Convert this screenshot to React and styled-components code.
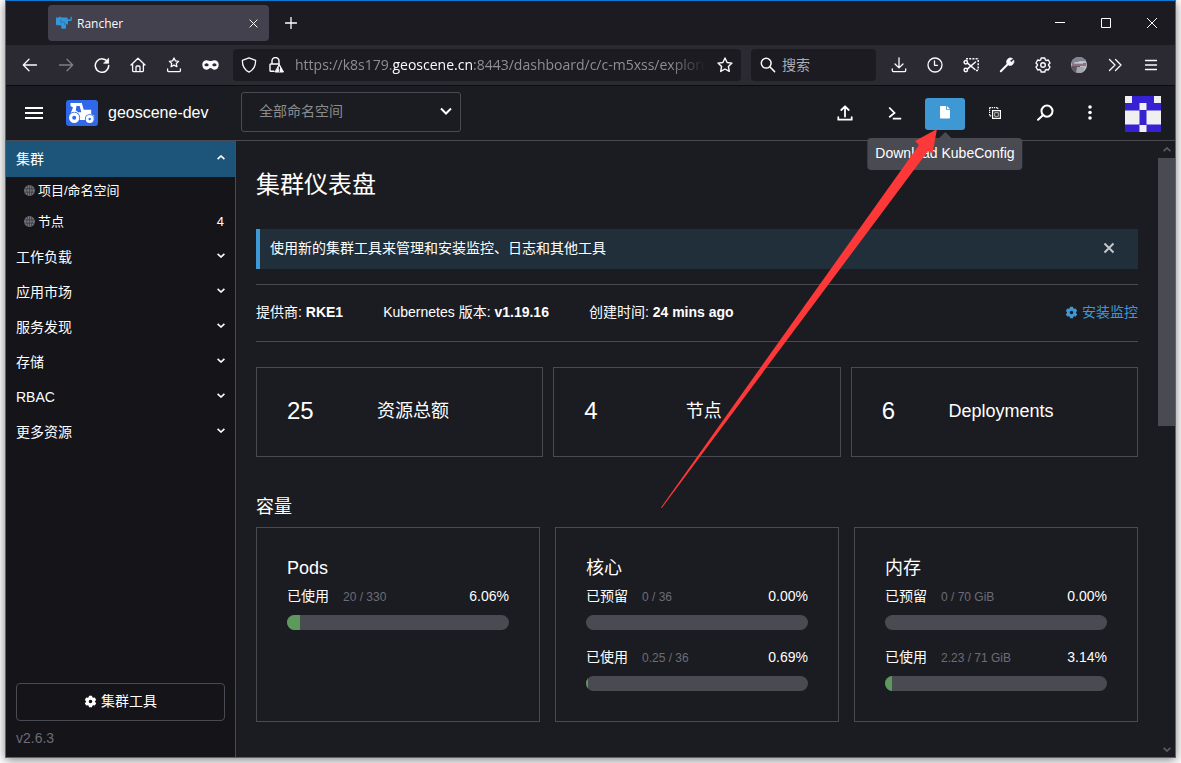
import styled, { createGlobalStyle } from "styled-components";

const GlobalStyle = createGlobalStyle`
    * {
        box-sizing: border-box;
    }
    body {
        margin: 0;
        background: #fff;
        color: #fff;
        font-family: "Liberation Sans", "Noto Sans CJK SC", sans-serif;
        font-size: 14px;
        line-height: 20px;
    }
    button, input, select {
        font: inherit;
        color: inherit;
        margin: 0;
        padding: 0;
        border: 0;
        background: none;
    }
    a {
        color: inherit;
        text-decoration: none;
    }
    svg {
        display: block;
        flex: none;
    }
`;

/* ---------- window ---------- */

const Desktop = styled.div`
    height: 100vh;
    padding: 0 5px 5px;
    overflow: hidden;
`;

const Window = styled.div`
    display: flex;
    flex-direction: column;
    height: 100%;
    border: 1px solid #0f78d0;
    background: #1b1c21;
    box-shadow: 0 2px 10px rgba(0, 0, 0, 0.5);
`;

const TitleBar = styled.div`
    display: flex;
    align-items: center;
    flex: none;
    height: 44px;
    padding-left: 42px;
    background: #1c1b22;
    font-family: "Open Sans", "Noto Sans CJK SC", sans-serif;
    font-size: 12px;
`;

const Tab = styled.div`
    display: flex;
    align-items: center;
    gap: 5px;
    width: 221px;
    height: 36px;
    padding: 0 8px;
    border-radius: 4px;
    background: #42414d;
    color: #fbfbfe;
    span {
        flex: 1;
        padding-top: 1px;
    }
`;

const TabButton = styled.button`
    display: flex;
    align-items: center;
    justify-content: center;
    width: ${(props) => props.$width}px;
    height: ${(props) => props.$height}px;
`;

const WindowControls = styled.div`
    display: flex;
    margin-left: auto;
`;

const ToolBar = styled.div`
    display: flex;
    align-items: center;
    flex: none;
    height: 41px;
    padding: 0 6px;
    border-bottom: 1px solid #0c0c0d;
    background: #2b2a33;
    color: #fbfbfe;
    font-family: "Open Sans", "Noto Sans CJK SC", sans-serif;
`;

const ToolButton = styled.button`
    display: flex;
    align-items: center;
    justify-content: center;
    width: 36px;
    height: 32px;
    opacity: ${(props) => (props.disabled ? 0.4 : 1)};
`;

const UrlBar = styled.div`
    display: flex;
    align-items: center;
    gap: 11px;
    flex: 1;
    min-width: 0;
    height: 32px;
    margin-left: 5px;
    padding: 0 8px;
    border-radius: 4px;
    background: #1c1b22;
`;

const UrlText = styled.div`
    flex: 1;
    min-width: 0;
    overflow: hidden;
    white-space: nowrap;
    font-size: 14px;
    color: #8f8e95;
    mask-image: linear-gradient(to left, transparent, #000 36px);
    b {
        font-weight: 400;
        color: #fbfbfe;
    }
`;

const SearchBox = styled.label`
    display: flex;
    align-items: center;
    gap: 6px;
    width: 125px;
    height: 32px;
    margin: 0 5px 0 10px;
    padding-left: 9px;
    border-radius: 4px;
    background: #1c1b22;
    input {
        width: 80px;
        outline: none;
    }
    input::placeholder {
        color: #adacb2;
        opacity: 1;
    }
`;

/* ---------- dashboard header ---------- */

const Header = styled.header`
    display: flex;
    align-items: center;
    flex: none;
    height: 55px;
    padding: 0 14px 0 12px;
    border-bottom: 1px solid #4a4b52;
    background: #1b1c21;
`;

const MenuButton = styled.button`
    display: flex;
    align-items: center;
    justify-content: center;
    width: 32px;
    height: 32px;
    margin-right: 16px;
`;

const ClusterName = styled.div`
    width: 143px;
    padding-left: 10px;
    font-size: 16px;
`;

const NamespaceFilter = styled.div`
    position: relative;
    width: 220px;
    height: 40px;
    margin-bottom: 2px;
    select {
        width: 100%;
        height: 100%;
        padding: 0 36px 2px 17px;
        appearance: none;
        border: 1px solid #4a4b52;
        border-radius: 3px;
        color: #8b8c90;
    }
    svg {
        position: absolute;
        right: 9px;
        top: 13px;
        pointer-events: none;
    }
`;

const Actions = styled.div`
    display: flex;
    align-items: center;
    gap: 10px;
    margin-left: auto;
    padding-top: 2px;
`;

const ActionSlot = styled.div`
    position: relative;
`;

const ActionButton = styled.button`
    display: flex;
    align-items: center;
    justify-content: center;
    width: ${(props) => props.$width || 40}px;
    height: 32px;
    padding-bottom: 3px;
    border-radius: 3px;
    background: ${(props) => (props.$active ? "#3d98d3" : "transparent")};
`;

const AvatarButton = styled.button`
    margin-left: 10px;
`;

const Tooltip = styled.div`
    position: absolute;
    top: 40px;
    left: 50%;
    z-index: 2;
    padding: 5px 8px 7px;
    border-radius: 4px;
    background: #4a4b52;
    white-space: nowrap;
    transform: translateX(-50%);
    &::before {
        content: "";
        position: absolute;
        top: -6px;
        left: 50%;
        margin-left: -6px;
        border: 6px solid transparent;
        border-top: 0;
        border-bottom-color: #4a4b52;
    }
`;

const Pointer = styled.svg`
    position: absolute;
    top: 31px;
    right: 28px;
    z-index: 3;
    pointer-events: none;
`;

/* ---------- side menu ---------- */

const Body = styled.div`
    display: flex;
    flex: 1;
    min-height: 0;
`;

const SideNav = styled.nav`
    display: flex;
    flex-direction: column;
    flex: none;
    width: 230px;
    border-right: 1px solid #4a4b52;
    background: #141419;
`;

const Group = styled.button`
    display: flex;
    align-items: center;
    justify-content: space-between;
    height: ${(props) => (props.$open ? 36 : 35)}px;
    padding: 0 10px;
    background: ${(props) => (props.$open ? "#1d5479" : "transparent")};
    text-align: left;
    svg {
        margin-bottom: ${(props) => (props.$open ? 4 : 2)}px;
    }
`;

const SubItem = styled.a`
    display: flex;
    align-items: center;
    gap: 3px;
    height: 31px;
    padding: 0 11px 4px 18px;
    font-size: 13px;
    em {
        margin-left: auto;
        font-style: normal;
    }
`;

const SideFooter = styled.div`
    display: flex;
    flex-direction: column;
    margin-top: auto;
    padding: 0 10px 9px;
    color: #6c6c76;
`;

const ToolsButton = styled.button`
    display: flex;
    align-items: center;
    justify-content: center;
    gap: 4px;
    height: 38px;
    margin-bottom: 7px;
    padding-bottom: 2px;
    border: 1px solid #4a4b52;
    border-radius: 4px;
    color: #fff;
`;

/* ---------- main ---------- */

const Main = styled.main`
    flex: 1;
    min-width: 0;
    padding: 28px 20px 0;
    overflow: hidden;
`;

const PageTitle = styled.h1`
    margin: 0 0 28px;
    font-size: 24px;
    font-weight: 400;
    line-height: 32px;
`;

const Banner = styled.div`
    display: flex;
    align-items: center;
    justify-content: space-between;
    height: 40px;
    margin-bottom: 15px;
    padding: 0 23px 2px 10px;
    border-left: 4px solid #3d98d3;
    background: #212f3b;
`;

const Glance = styled.div`
    display: flex;
    align-items: center;
    gap: 40px;
    height: 58px;
    margin-bottom: 25px;
    padding-bottom: 2px;
    border: solid #4a4b52;
    border-width: 1px 0;
`;

const InstallLink = styled.a`
    display: flex;
    align-items: center;
    gap: 4px;
    margin-left: auto;
    color: #3d98d3;
`;

const Cards = styled.div`
    display: grid;
    grid-template-columns: repeat(3, 1fr);
    gap: ${(props) => props.$gap}px;
`;

const CountCard = styled.div`
    display: flex;
    align-items: center;
    height: 90px;
    padding: 0 30px 2px;
    border: 1px solid #4a4b52;
    font-size: 18px;
    strong {
        font-size: 24px;
        font-weight: 400;
    }
    span {
        flex: 1;
        text-align: center;
    }
`;

const SectionTitle = styled.h3`
    margin: 36px 0 6px;
    font-size: 18px;
    font-weight: 400;
    line-height: 28px;
`;

const GaugeCard = styled.div`
    padding: 30px;
    border: 1px solid #4a4b52;
    h3 {
        margin: 0 0 8px;
        font-size: 18px;
        font-weight: 400;
        line-height: 20px;
    }
`;

const Gauge = styled.div`
    & + & {
        margin-top: 17px;
    }
`;

const GaugeText = styled.div`
    display: flex;
    align-items: baseline;
    height: 20px;
    margin-bottom: 9px;
    small {
        flex: 1;
        margin-left: 14px;
        font-size: 12px;
        color: #6c6c76;
    }
`;

const Track = styled.div`
    height: 15px;
    overflow: hidden;
    border-radius: 8px;
    background: #4a4b52;
    div {
        height: 100%;
        background: #5d995d;
    }
`;

const ScrollBar = styled.div`
    display: flex;
    flex-direction: column;
    align-items: center;
    flex: none;
    width: 17px;
    padding: 6px 0 5px;
    color: #5d5e64;
`;

const ScrollTrack = styled.div`
    flex: 1;
    width: 100%;
    margin: 6px 0;
    div {
        height: 46%;
        background: #4a4b52;
    }
`;

/* ---------- icons ---------- */

function Line({ size = 16, width = 1.3, d, children, box = 16 }) {
    return (
        <svg
            width={size}
            height={size}
            viewBox={`0 0 ${box} ${box}`}
            fill="none"
            stroke="currentColor"
            strokeWidth={width}
            strokeLinecap="round"
            strokeLinejoin="round"
        >
            {d && <path d={d} />}
            {children}
        </svg>
    );
}

const GEAR = "M6.2 1h3.6l.5 1.9 1 .6 2-.5 1.7 3-1.4 1.4v1.2L15 10l-1.7 3-2-.5-1 .6-.5 1.9H6.2l-.5-1.9-1-.6-2 .5L1 10l1.4-1.4V7.4L1 6l1.7-3 2 .5 1-.6z";

function Cog() {
    return (
        <svg width="13" height="13" viewBox="0 0 16 16" fill="currentColor" fillRule="evenodd">
            <path d={GEAR + "M8 5.8a2.2 2.2 0 1 0 0 4.4 2.2 2.2 0 0 0 0-4.4z"} />
        </svg>
    );
}

function Chevron({ up }) {
    return (
        <svg width="8" height="5" viewBox="0 0 8 5" fill="none" stroke="currentColor" strokeWidth="1.6">
            <path d={up ? "M.6 4.2 4 1l3.4 3.2" : "M.6.8 4 4 7.4.8"} />
        </svg>
    );
}

function Globe() {
    return (
        <svg width="11" height="11" viewBox="0 0 11 11" fill="none">
            <circle cx="5.5" cy="5.5" r="5.4" fill="#74747d" />
            <path d="M.5 3.8h10M.5 7.2h10M5.5.4v10.2M3.6.8Q2 5.5 3.6 10.2M7.4.8Q9 5.5 7.4 10.2" stroke="#2c2c33" strokeWidth=".6" />
        </svg>
    );
}

function RancherMark() {
    return (
        <svg width="16" height="16" viewBox="0 0 16 16" fill="#3497da">
            <path d="M0 2.5h3l.6-.7h1l.6.7H11l.8.8v1.3h1.7c.9 0 1-.5 1-1.2V1.8h1.3v3c0 .8-.5 1.2-1.2 1.2H12v3.600H10V13l-.8.8H6l-.8-.8v-2.700H.8L0 9.500z" />
            <path d="M4.800 4.200v4.200M5 7h3.400M8.400 7v2.300H12" stroke="#276896" strokeWidth=".6" fill="none" />
        </svg>
    );
}

function Tractor() {
    return (
        <svg width="32" height="26" viewBox="0 0 32 26">
            <rect width="32" height="26" rx="3" fill="#2f68e9" />
            <path d="M4.500 3h11.300l1.900 6.800h7.500v4.400l3 1.300v4.500H13l-2-5-6.500-1.500L7 7.500 4.500 6z" fill="#fff" />
            <path d="M10.500 6h3.200l1.600 6.200h-3.200l-2.400-2z" fill="#2f68e9" />
            <circle cx="8.200" cy="17.800" r="6" fill="#2f68e9" />
            <circle cx="8.200" cy="17.800" r="3.600" fill="none" stroke="#fff" strokeWidth="3.200" />
            <circle cx="23.700" cy="19" r="4.800" fill="#2f68e9" />
            <circle cx="23.700" cy="19" r="2.600" fill="none" stroke="#fff" strokeWidth="2.800" />
        </svg>
    );
}

function Identicon() {
    return (
        <svg width="36" height="36" viewBox="0 0 36 36">
            <path fill="#3722d3" d="M0 0h36v36H0z" />
            <path fill="#f0f0f0" d="M0 0h7v7H0zM29 0h7v7h-7zM14.500 7h7v7h-7zM0 14.500h14.500v14H0zM21.500 14.500H36v14H21.500zM14.500 29h7v7h-7z" />
        </svg>
    );
}

const Back = () => <Line d="M14.500 8h-13M7 2.300 1.300 8 7 13.700" />;
const Forward = () => <Line d="M1.500 8h13M9 2.300 14.700 8 9 13.700" />;
const Reload = () => (
    <Line width={1.5} d="M13.800 5.200A6.700 6.700 0 1 0 14.700 8.500">
        <path d="M14.600 1.600v4.600H10z" fill="currentColor" strokeWidth="0.8" />
    </Line>
);
const Home = () => <Line d="M1 8 8 1.300 15 8M2.600 7v6.800c0 .5.3.8.8.8h9.200c.5 0 .8-.3.8-.8V7M6 14.500V10c0-.6.4-1 1-1h2c.6 0 1 .4 1 1v4.500" />;
const StarTray = () => <Line d="M8 1l1.400 2.900 3.200.4-2.300 2.200.6 3.200L8 8.200 5.100 9.700l.6-3.200-2.300-2.200 3.200-.4zM1.600 12v1.800c0 .5.4.8.9.8h11c.5 0 .9-.3.9-.8V12" />;
const Mask = () => (
    <svg width="17" height="16" viewBox="0 0 17 16" fill="currentColor" fillRule="evenodd">
        <path d="M4.600 3.200c1.700 0 2.600.8 3.900.8s2.200-.8 3.900-.8C15 3.200 16.700 5 16.700 7.600c0 3-1.500 5.200-4 5.200-2 0-2.900-1.800-4.200-1.800s-2.200 1.800-4.200 1.800c-2.500 0-4-2.200-4-5.200C.3 5 2 3.200 4.600 3.200zM4.600 6.200C3.300 6.200 2.400 7.400 2.400 8c0 .7 1.100 1.300 2.200 1.300S6.700 8.700 6.700 8c0-.7-.9-1.800-2.100-1.800zM12.400 6.200c-1.200 0-2.100 1.100-2.100 1.800s1 1.300 2.100 1.300 2.200-.6 2.200-1.300c0-.6-.9-1.800-2.200-1.800z" />
    </svg>
);
const Shield = () => <Line d="M8 .9 14.600 3.300c.2 5.300-1.600 9.400-6.600 11.800C3 12.700 1.200 8.600 1.400 3.300z" />;
const LockWarning = () => (
    <Line width={1.4} d="M4 7V4a3.500 3.500 0 0 1 7 0v3M6 14.300H2.800c-.5 0-.8-.3-.8-.8V8c0-.6.3-1 .8-1h8.400">
        <path d="M11.400 7.600 15.500 15H7.300z" fill="currentColor" strokeWidth="1" />
        <path d="M11.400 10.200v2M11.400 13.900v.1" stroke="#1c1b22" strokeWidth="1.300" />
    </Line>
);
const Star = () => <Line width={1.4} d="M8 1l2.100 4.500 4.900.6-3.600 3.400.9 4.900L8 12l-4.300 2.400.9-4.900L1 6.100l4.900-.6z" />;
const Magnifier = () => <Line width={1.5} d="M9.800 9.800 14.600 14.600"><circle cx="6.200" cy="6.200" r="4.900" /></Line>;
const Download = () => <Line d="M8 .8v9.800M4 7l4 3.900L12 7M1.300 11.800v1.800c0 .6.4 1 1 1h11.400c.6 0 1-.4 1-1v-1.800" />;
const Clock = () => <Line d="M7.500 4v4.300h3"><circle cx="8" cy="8" r="7" /></Line>;
const Snip = () => (
    <Line width={1.5} d="M4.800 6.400 12 12.500M4.800 11.600 12.500 5">
        <circle cx="2.800" cy="5.200" r="1.700" />
        <circle cx="2.800" cy="13" r="1.700" />
        <path d="M3 1.800h13M15.200 3v10M13 13.500h2" strokeDasharray="2 1.200" strokeLinecap="butt" />
    </Line>
);
const Wrench = () => (
    <Line width={2} d="M1.800 14.300 8.500 7.500">
        <path d="M13.400 1.400A4 4 0 0 0 7.800 6.400L9.700 8.300A4 4 0 0 0 14.700 3L12.300 5.300 10.800 3.900z" fill="currentColor" strokeWidth="0.6" />
    </Line>
);
const Settings = () => <Line d={GEAR} width={1.4}><circle cx="8" cy="8" r="2.300" /></Line>;
const Account = () => (
    <svg width="16" height="16" viewBox="0 0 16 16">
        <clipPath id="face"><circle cx="8" cy="8" r="8" /></clipPath>
        <g clipPath="url(#face)">
            <path fill="#b8bcc4" d="M0 0h16v16H0z" />
            <path fill="#7d8691" d="M0 0h16v4H9L4 6H0z" />
            <path fill="#93707f" d="M1 6h14v3H1z" />
            <path fill="#e4dedf" d="M3 5.500h9v1H3z" />
            <path fill="#5c5960" d="M0 9h9v7H0z" />
            <path fill="#a3a8ad" d="M6 10h7v6H5z" />
        </g>
    </svg>
);
const More = () => <Line d="M2.500 2.500 8 8l-5.500 5.500M8.500 2.500 14 8l-5.500 5.500" />;
const Burger = () => <Line d="M2.500 3.500h11M2.500 8h11M2.500 12.500h11" />;

const Upload = () => <Line width={1.8} d="M8 11.500V1.500M4.300 5 8 1.300 11.700 5M1.300 12.200v2.500h13.400v-2.500" />;
const Shell = () => (
    <svg width="14" height="16" viewBox="0 0 14 16" fill="none" stroke="currentColor" strokeWidth="1.8">
        <path d="M1.200 2.500 6.500 8l-5.300 4.300M4.800 13.700h8.400" />
    </svg>
);
const File = () => (
    <svg width="10" height="13" viewBox="0 0 10 13" fill="currentColor">
        <path d="M1 0h5v3.800h4v7.700c0 .6-.4 1-1 1H1c-.6 0-1-.4-1-1V1c0-.6.4-1 1-1zM6.900.1 9.900 3h-3z" />
    </svg>
);
const Copy = () => (
    <svg width="12" height="12" viewBox="0 0 12 12" fill="none" stroke="currentColor">
        <path d="M.6.6h8.200v2.500M.6.6v8.200h2.500" strokeWidth="1.200" strokeDasharray="1.300 .8" />
        <path d="M3.600 3.600h7.800v7.800H3.600z" strokeWidth="1.200" />
        <path d="M5.700 5.700h3.600v3.600H5.700z" strokeWidth="1" opacity=".7" />
    </svg>
);
const Search = () => <Line size={17} width={1.9} d="M5.800 10.300 1 14.800"><circle cx="9.400" cy="6.700" r="5.200" /></Line>;
const Kebab = () => (
    <svg width="4" height="15" viewBox="0 0 4 15" fill="currentColor">
        <circle cx="2" cy="2" r="1.800" />
        <circle cx="2" cy="7.500" r="1.800" />
        <circle cx="2" cy="13" r="1.800" />
    </svg>
);

/* ---------- data ---------- */

const groups = ["工作负载", "应用市场", "服务发现", "存储", "RBAC", "更多资源"];

const counts = [
    { value: 25, label: "资源总额" },
    { value: 4, label: "节点" },
    { value: 6, label: "Deployments" },
];

const capacity = [
    { title: "Pods", rows: [{ label: "已使用", amount: "20 / 330", percent: 6.06 }] },
    {
        title: "核心",
        rows: [
            { label: "已预留", amount: "0 / 36", percent: 0 },
            { label: "已使用", amount: "0.25 / 36", percent: 0.69 },
        ],
    },
    {
        title: "内存",
        rows: [
            { label: "已预留", amount: "0 / 70 GiB", percent: 0 },
            { label: "已使用", amount: "2.23 / 71 GiB", percent: 3.14 },
        ],
    },
];

function BrowserChrome() {
    return (
        <>
            <TitleBar>
                <Tab>
                    <RancherMark />
                    <span>Rancher</span>
                    <TabButton $width={16} $height={16} aria-label="close tab">
                        <Line size={9} width={1.1} box={10} d="M1 1l8 8M9 1 1 9" />
                    </TabButton>
                </Tab>
                <TabButton $width={43} $height={36} aria-label="new tab">
                    <Line size={12} box={12} width={1.3} d="M6 .5v11M.5 6h11" />
                </TabButton>
                <WindowControls>
                    <TabButton $width={46} $height={44} aria-label="minimize">
                        <svg width="10" height="10" shapeRendering="crispEdges"><path d="M0 4h10v1H0z" fill="#fff" /></svg>
                    </TabButton>
                    <TabButton $width={46} $height={44} aria-label="maximize">
                        <svg width="10" height="10"><path d="M.5.5h9v9h-9z" fill="none" stroke="#fff" /></svg>
                    </TabButton>
                    <TabButton $width={46} $height={44} aria-label="close">
                        <svg width="10" height="10"><path d="M0 0l10 10M10 0 0 10" stroke="#fff" /></svg>
                    </TabButton>
                </WindowControls>
            </TitleBar>
            <ToolBar>
                <ToolButton aria-label="back"><Back /></ToolButton>
                <ToolButton aria-label="forward" disabled><Forward /></ToolButton>
                <ToolButton aria-label="reload"><Reload /></ToolButton>
                <ToolButton aria-label="home"><Home /></ToolButton>
                <ToolButton aria-label="bookmarks"><StarTray /></ToolButton>
                <ToolButton aria-label="mask"><Mask /></ToolButton>
                <UrlBar>
                    <Shield />
                    <LockWarning />
                    <UrlText role="textbox" aria-label="address" contentEditable suppressContentEditableWarning spellCheck={false}>
                        https://k8s179.<b>geoscene.cn</b>:8443/dashboard/c/c-m5xss/explore
                    </UrlText>
                    <Star />
                </UrlBar>
                <SearchBox>
                    <Magnifier />
                    <input type="text" placeholder="搜索" aria-label="搜索" />
                </SearchBox>
                <ToolButton aria-label="downloads"><Download /></ToolButton>
                <ToolButton aria-label="history"><Clock /></ToolButton>
                <ToolButton aria-label="screenshot"><Snip /></ToolButton>
                <ToolButton aria-label="developer"><Wrench /></ToolButton>
                <ToolButton aria-label="settings"><Settings /></ToolButton>
                <ToolButton aria-label="account"><Account /></ToolButton>
                <ToolButton aria-label="more tools"><More /></ToolButton>
                <ToolButton aria-label="menu"><Burger /></ToolButton>
            </ToolBar>
        </>
    );
}

function TopHeader() {
    return (
        <Header>
            <MenuButton aria-label="menu">
                <svg width="18" height="12" fill="#fff"><path d="M0 0h18v2H0zM0 5h18v2H0zM0 10h18v2H0z" /></svg>
            </MenuButton>
            <Tractor />
            <ClusterName>geoscene-dev</ClusterName>
            <NamespaceFilter>
                <select aria-label="命名空间" defaultValue="all">
                    <option value="all">全部命名空间</option>
                </select>
                <svg width="12" height="12" viewBox="0 0 12 12" fill="none" stroke="#fff" strokeWidth="2">
                    <path d="M1 3.500 6 8.500l5-5" />
                </svg>
            </NamespaceFilter>
            <Actions>
                <ActionButton aria-label="import"><Upload /></ActionButton>
                <ActionButton aria-label="shell"><Shell /></ActionButton>
                <ActionSlot>
                    <ActionButton $active aria-label="kubeconfig"><File /></ActionButton>
                    <Tooltip role="tooltip">Download KubeConfig</Tooltip>
                    <Pointer width="276" height="379" viewBox="0 0 276 379" aria-hidden="true">
                        <path d="M276 0 271.500 24.500 267 22 .8 379 0 378.500 258 16 254 12z" fill="#fd3838" />
                    </Pointer>
                </ActionSlot>
                <ActionButton aria-label="copy"><Copy /></ActionButton>
                <ActionButton aria-label="search"><Search /></ActionButton>
                <ActionButton $width={30} aria-label="more"><Kebab /></ActionButton>
                <AvatarButton aria-label="user"><Identicon /></AvatarButton>
            </Actions>
        </Header>
    );
}

function SideMenu() {
    return (
        <SideNav>
            <Group $open>集群<Chevron up /></Group>
            <SubItem href="#namespaces"><Globe />项目/命名空间</SubItem>
            <SubItem href="#nodes"><Globe />节点<em>4</em></SubItem>
            {groups.map((name) => (
                <Group key={name}>{name}<Chevron /></Group>
            ))}
            <SideFooter>
                <ToolsButton><Cog />集群工具</ToolsButton>
                v2.6.3
            </SideFooter>
        </SideNav>
    );
}

function Dashboard() {
    return (
        <Main>
            <PageTitle>集群仪表盘</PageTitle>
            <Banner>
                使用新的集群工具来管理和安装监控、日志和其他工具
                <button aria-label="close">
                    <svg width="12" height="12" viewBox="0 0 12 12" stroke="#c3c7cb" strokeWidth="2"><path d="M1.500 1.500l9 9M10.500 1.500l-9 9" /></svg>
                </button>
            </Banner>
            <Glance>
                <div>提供商: <b>RKE1</b></div>
                <div>Kubernetes 版本: <b>v1.19.16</b></div>
                <div>创建时间: <b>24 mins ago</b></div>
                <InstallLink href="#monitoring"><Cog />安装监控</InstallLink>
            </Glance>
            <Cards $gap={10}>
                {counts.map((item) => (
                    <CountCard key={item.label}>
                        <strong>{item.value}</strong>
                        <span>{item.label}</span>
                    </CountCard>
                ))}
            </Cards>
            <SectionTitle>容量</SectionTitle>
            <Cards $gap={15}>
                {capacity.map((card) => (
                    <GaugeCard key={card.title}>
                        <h3>{card.title}</h3>
                        {card.rows.map((row) => (
                            <Gauge key={row.label}>
                                <GaugeText>
                                    {row.label}
                                    <small>{row.amount}</small>
                                    {row.percent.toFixed(2)}%
                                </GaugeText>
                                <Track>
                                    <div style={{ width: `${row.percent}%` }} />
                                </Track>
                            </Gauge>
                        ))}
                    </GaugeCard>
                ))}
            </Cards>
        </Main>
    );
}

export default function App() {
    return (
        <Desktop>
            <GlobalStyle />
            <Window>
                <BrowserChrome />
                <TopHeader />
                <Body>
                    <SideMenu />
                    <Dashboard />
                    <ScrollBar>
                        <Chevron up />
                        <ScrollTrack><div /></ScrollTrack>
                        <Chevron />
                    </ScrollBar>
                </Body>
            </Window>
        </Desktop>
    );
}
